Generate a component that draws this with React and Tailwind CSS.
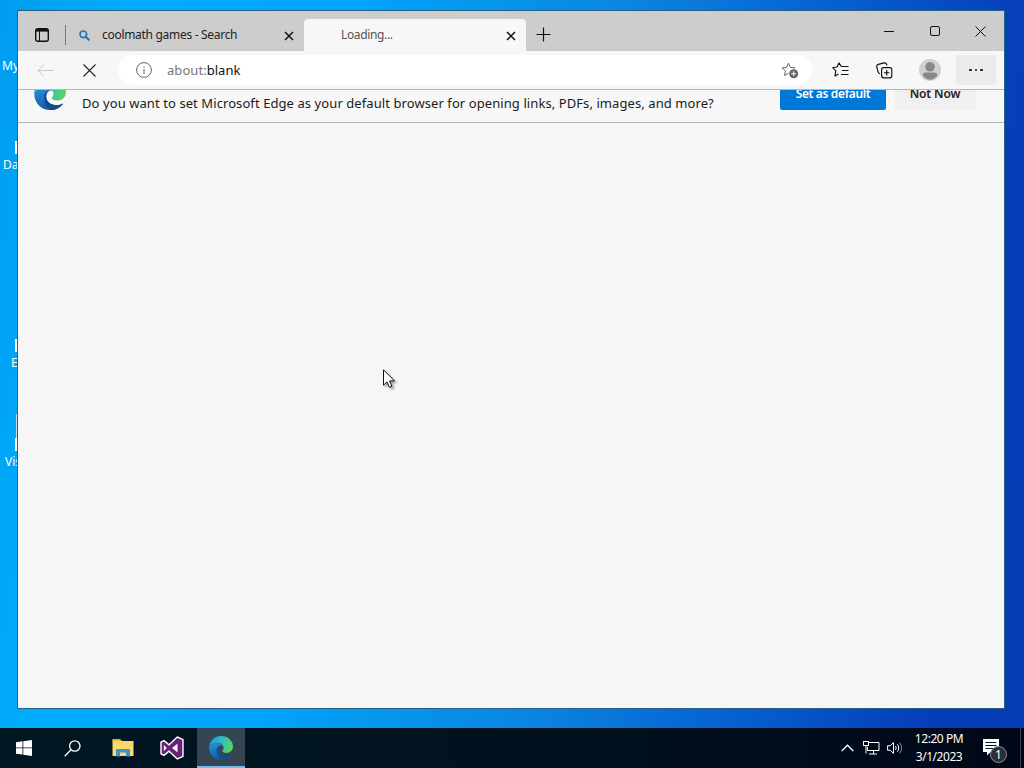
import { useId } from "react";

function EdgeLogo({ className }) {
  const id = useId();
  return (
    <svg viewBox="0 0 32 32" className={className}>
      <defs>
        <linearGradient id={id + "a"} x1="0" y1="0.3" x2="1" y2="0.6">
          <stop offset="0" stopColor="#2499dc" />
          <stop offset="0.5" stopColor="#31bfc0" />
          <stop offset="1" stopColor="#5bd65b" />
        </linearGradient>
        <linearGradient id={id + "b"} x1="0" y1="0" x2="0.4" y2="1">
          <stop offset="0" stopColor="#2496de" />
          <stop offset="1" stopColor="#1558a8" />
        </linearGradient>
      </defs>
      <path
        fill={`url(#${id}a)`}
        d="M.3 14.5C1 6.300 7.600 0 16 0c9.300 0 16 6.600 16 14 0 5-4 8.500-8.500 8.500-3.800 0-5.700-1.300-5.700-2.500 0-.7 1.700-1.500 1.700-4.200C19.500 11.500 15.300 9 10.500 9 5.500 9 1.700 11.200.3 14.500Z"
      />
      <path
        fill={`url(#${id}b)`}
        d="M.3 14.500C1.700 11.200 5.500 9 10.500 9c3.800 0 7 1.600 8.400 4.200-1.200-.7-2.200-.8-3.200-.5-2.200.7-3.500 3-3.500 5.700 0 5.500 5.300 8.700 10.300 8.700 2.900 0 5.100-.9 6.600-1.700C26.500 29.400 22 32 16.500 32 7 32-.3 24.500.3 14.500Z"
      />
      <path
        fill="#164a8b"
        d="M10.200 17.500c.4-2.700 2.500-4.700 5.500-4.800-2.200.7-3.500 3-3.500 5.700 0 5.500 5.300 8.700 10.300 8.700 2.900 0 5.100-.9 6.600-1.700-2.500 4-7 6.600-12.100 6.600-4.500-2.500-7.500-8.500-6.800-14.500Z"
      />
    </svg>
  );
}

function TabClose() {
  return (
    <svg viewBox="0 0 10 10" className="mt-px size-[10px] shrink-0" stroke="#111" strokeWidth="1.500">
      <path d="M1 1l8 8M9 1l-8 8" />
    </svg>
  );
}

function TabStrip() {
  return (
    <div className="flex h-10 shrink-0 bg-[#cdcdcd]">
      <div className="flex w-[48px] items-center pt-2">
        <svg viewBox="0 0 14 14" className="ml-[17px] size-[14px]" fill="none" stroke="#111">
          <rect x="0.7" y="0.7" width="12.600" height="12.600" rx="2" strokeWidth="1.400" />
          <path d="M1 2.300h12" strokeWidth="2.600" />
          <path d="M4.500 3v10" strokeWidth="1" />
        </svg>
        <div className="ml-auto h-[20px] w-px bg-[#777]" />
      </div>
      <div className="flex w-[238px] items-center pt-2 pr-[10px] pl-[13px]">
        <svg viewBox="0 0 11 11" className="size-[11px]" fill="none" stroke="#2b74b8" strokeWidth="1.700">
          <circle cx="4.300" cy="4.300" r="3.300" />
          <path d="M6.800 6.800l3.600 3.600" strokeWidth="2.100" />
        </svg>
        <span className="ml-3 text-[12px] tracking-[-0.3px] whitespace-nowrap text-[#222]">
          coolmath games - Search
        </span>
        <div className="ml-auto flex">
          <TabClose />
        </div>
      </div>
      <div className="mt-2 flex w-[222px] items-center rounded-t-[4px] bg-[#f7f7f7] pr-[10px] pl-[37px]">
        <span className="text-[12px] tracking-[-0.35px] text-[#555]">Loading...</span>
        <div className="ml-auto flex">
          <TabClose />
        </div>
      </div>
      <div className="flex items-center pt-[7px] pl-[10px]">
        <svg viewBox="0 0 15 15" className="size-[15px]" stroke="#111" strokeWidth="1.200">
          <path d="M7.500 0.500v14M0.500 7.500h14" />
        </svg>
      </div>
      <div className="ml-auto flex">
        <div className="flex w-[46px] items-center justify-center">
          <div className="h-px w-[10px] bg-[#111]" />
        </div>
        <div className="flex w-[46px] items-center justify-center pr-px">
          <div className="size-[10px] rounded-[2px] border border-[#111]" />
        </div>
        <div className="flex w-[46px] items-center justify-center pr-px">
          <svg viewBox="0 0 11 11" className="size-[11px]" stroke="#111">
            <path d="M0.500 0.500l10 10M10.500 0.500l-10 10" />
          </svg>
        </div>
      </div>
    </div>
  );
}

const STAR = "M7.500 1.200l1.900 4.200 4.500.5-3.400 3 1 4.600-4-2.300-4 2.300 1-4.600-3.400-3 4.500-.5z";

function Toolbar() {
  return (
    <div className="flex h-[39px] shrink-0 items-center border-b border-[#b5b5b5] bg-[#f7f7f7] pr-2 pl-[6px]">
      <div className="flex w-11 justify-center pr-px">
        <svg viewBox="0 0 17 13" className="h-[13px] w-[17px]" fill="none" stroke="#c8c8c8">
          <path d="M7 0.500l-6 6 6 6M1 6.500h15.500" />
        </svg>
      </div>
      <div className="flex w-11 justify-center pr-px">
        <svg viewBox="0 0 13 13" className="size-[13px]" stroke="#222" strokeWidth="1.100">
          <path d="M0.500 0.500l12 12M12.500 0.500l-12 12" />
        </svg>
      </div>
      <div className="ml-[6px] flex h-[30px] w-[694px] items-center rounded-full bg-white pr-[13px] pl-[18px]">
        <svg viewBox="0 0 16 16" className="size-[16px]" fill="none" stroke="#666">
          <circle cx="8" cy="8" r="7.400" />
          <path d="M8 7v5" />
          <path d="M8 4.300v1.300" />
        </svg>
        <span className="mt-[2px] ml-[15px] text-[13px] tracking-[0.05px] text-[#111]">
          <span className="text-[#767676]">about:</span>blank
        </span>
        <svg viewBox="0 0 18 17" className="mt-px ml-auto h-[17px] w-[18px]" fill="none">
          <path d={STAR} stroke="#666" />
          <circle cx="12.700" cy="11.700" r="5.200" fill="#fff" />
          <circle cx="12.700" cy="11.700" r="4.500" fill="#666" />
          <path d="M12.700 9.300v4.800M10.300 11.700h4.800" stroke="#fff" />
        </svg>
      </div>
      <div className="ml-[6px] flex w-11 justify-center">
        <svg viewBox="0 0 17 16" className="h-[16px] w-[17px]" fill="none" stroke="#111" strokeLinejoin="round">
          <path
            d="M9.300 4.500L7 0.900 5 5 0.600 5.700l3.200 3.200-.8 5 3.500-1.900M9.300 4.500h7.200M10 8.500h6.500M9 12.500h7.500"
            strokeWidth="1.150"
          />
        </svg>
      </div>
      <div className="flex w-11 justify-center">
        <svg viewBox="0 0 17 17" className="h-[17px] w-[17px]" fill="none" stroke="#111" strokeWidth="1.150">
          <rect x="5.600" y="5.600" width="10.200" height="10.200" rx="2" />
          <path d="M10.700 8v5.400M8 10.700h5.400" />
          <path d="M4 11.700c-1.200-.3-1.800-1-2-2L0.800 5c-.3-1.200.3-2.200 1.500-2.600L8 .9c1.200-.3 2.200.2 2.600 1.400l.3 1.200" />
        </svg>
      </div>
      <div className="ml-[13px] w-[22px]">
        <svg viewBox="0 0 22 22" className="size-[22px]">
          <circle cx="11" cy="11" r="11" fill="#d2d0ce" />
          <circle cx="11" cy="7.800" r="4.800" fill="#8a8886" />
          <path d="M3.800 16.500c0-2 1.400-2.900 3-2.900h8.400c1.600 0 3 .9 3 2.900-1.700 2.600-4.200 4.200-7.200 4.200s-5.500-1.600-7.200-4.200z" fill="#8a8886" />
        </svg>
      </div>
      <div className="ml-auto flex h-[30px] w-10 items-center justify-center gap-[3px] rounded-[2px] bg-[#ebebeb]">
        <div className="size-[2.5px] rounded-full bg-[#111]" />
        <div className="size-[2.5px] rounded-full bg-[#111]" />
        <div className="size-[2.5px] rounded-full bg-[#111]" />
      </div>
    </div>
  );
}

function DefaultBrowserBar() {
  return (
    <div className="flex h-[33px] shrink-0 items-end overflow-hidden border-b border-[#b5b5b5] bg-[#f7f7f7] pb-3 pl-4">
      <EdgeLogo className="size-8 shrink-0" />
      <span className="-mb-[3px] ml-4 text-[13px] leading-[20px] tracking-[0.08px] whitespace-nowrap text-[#1b1b1b]">
        Do you want to set Microsoft Edge as your default browser for opening links, PDFs, images, and more?
      </span>
      <div className="mr-7 ml-auto flex shrink-0 gap-[9px] text-[12px] leading-4 font-semibold">
        <div className="flex h-8 w-[106px] items-center justify-center rounded-[2px] bg-[#0078d7] tracking-[-0.35px] text-white">
          Set as default
        </div>
        <div className="flex h-8 w-[81px] items-center justify-center rounded-[2px] bg-[#f0f0f0] pr-px tracking-[-0.15px] text-[#222]">
          Not Now
        </div>
      </div>
    </div>
  );
}

function Taskbar() {
  return (
    <div className="flex h-10 items-stretch bg-linear-to-r from-[#001722] via-[#00121e] to-[#000818] text-white">
      <div className="flex w-12 items-center justify-center">
        <svg viewBox="0 0 16 16" className="size-[16px]" fill="#fff">
          <path d="M0 2.200l6.500-.9v6.200H0zM7.300 1.200L16 0v7.500H7.300zM0 8.300h6.500v6.300L0 13.700zM7.300 8.300H16V16l-8.700-1.200z" />
        </svg>
      </div>
      <div className="flex w-12 items-center justify-center">
        <svg viewBox="0 0 17 17" className="size-[17px]" fill="none" stroke="#fff" strokeWidth="1.300">
          <circle cx="10.800" cy="6" r="5.200" />
          <path d="M7 9.800L0.700 16.200" />
        </svg>
      </div>
      <div className="flex w-[53px] items-center justify-center">
        <svg viewBox="0 0 22 18" className="h-[18px] w-[22px]">
          <path d="M0.500 0h7.500l1.500 2H0.500z" fill="#e7a82c" />
          <path d="M0.500 2h21v15h-21z" fill="#fbd86c" />
          <path d="M0.500 2h8l2-1h-10z" fill="#f0b73c" />
          <path d="M4 17.500v-6.300c0-.7.500-1.200 1.200-1.200h11.600c.7 0 1.200.5 1.200 1.200v6.300h-4v-4H8v4z" fill="#3f93cb" />
        </svg>
      </div>
      <div className="flex w-12 items-center justify-center pr-[2px]">
        <svg viewBox="0 0 24 24" className="size-[24px]">
          <path
            d="M17.300 1L23 3.600v16.800L17.300 23 9 15.200 4 19.300 1 17.800V6.200l3-1.500 5 4.100z"
            fill="#68217a"
            stroke="#fff"
            strokeWidth="1.400"
          />
          <path d="M17.500 7.700v8.600L12 12zM3.800 9v6l3-3z" fill="#fff" />
        </svg>
      </div>
      <div className="flex w-12 items-center justify-center border-b-2 border-[#76b9ed] bg-[#344652]">
        <EdgeLogo className="mt-px size-6" />
      </div>
      <div className="ml-auto flex items-center">
        <svg viewBox="0 0 13 8" className="h-[8px] w-[13px]" fill="none" stroke="#fff" strokeWidth="1.300">
          <path d="M0.700 7l5.800-5.800L12.300 7" />
        </svg>
        <svg viewBox="0 0 17 14" className="ml-[9px] h-[14px] w-[17px]" fill="none" stroke="#fff">
          <path d="M6 1.500h10v8H4.500V6M10.500 9.500v3.500M6 13h8M3 7v5.500" />
          <rect x="0.500" y="0.500" width="5" height="4" />
          <path d="M3 4v3" />
        </svg>
        <svg viewBox="0 0 16 14" className="ml-[7px] h-[14px] w-[16px]" fill="none" stroke="#fff">
          <path d="M0.600 4.700h2.700L6.500 1.500v11L3.300 9.300H0.600z" />
          <path d="M8.500 5c.8 1.200.8 2.800 0 4M10.500 3.300c1.600 2.300 1.600 5.100 0 7.400" />
          <path d="M12.700 1.700c2.400 3.300 2.400 7.300 0 10.600" stroke="#8b949c" />
        </svg>
        <div className="ml-[6px] w-[60px] text-center text-[12px] leading-[18px] tracking-[-0.45px] whitespace-nowrap">
          <div>12:20 PM</div>
          <div>3/1/2023</div>
        </div>
        <div className="relative mr-[12px] ml-[14px] h-[18px] w-[25px]">
          <svg viewBox="0 0 17 17" className="size-[17px]">
            <path d="M0 0h16v13H7.500L4 16.500V13H0z" fill="#fff" />
            <path d="M2.500 3.500h11M2.500 6.500h11M2.500 9.500h8" stroke="#06121e" />
          </svg>
          <div className="absolute top-[7px] left-[7px] flex size-[17px] items-center justify-center rounded-full border border-[#8b8f94] bg-[#2b3038] text-[12px] leading-none">
            1
          </div>
        </div>
        <div className="mr-[3px] h-full w-px bg-[#3a4454]" />
      </div>
    </div>
  );
}

export default function App() {
  return (
    <div className="relative flex h-[768px] w-[1024px] flex-col overflow-hidden bg-[linear-gradient(98deg,#009df0_0%,#00adfc_12%,#00a4f8_32%,#0b86e2_55%,#0660cf_74%,#053fb9_90%,#053cb4_100%)] font-['Noto_Sans','Open_Sans',sans-serif]">
      <div className="min-h-0 flex-1 text-[12px] leading-4 text-white">
        <div className="absolute top-[58px] left-[2px]">My</div>
        <div className="absolute top-[141px] left-[15px] h-[13px] w-2 bg-white" />
        <div className="absolute top-[157px] left-[3px]">Da</div>
        <div className="absolute top-[339px] left-[15px] h-[13px] w-2 bg-white" />
        <div className="absolute top-[355px] left-[11px]">E</div>
        <div className="absolute top-[414px] left-[16px] h-[24px] w-2 bg-[#b9dfed]" />
        <div className="absolute top-[438px] left-[15px] h-[13px] w-2 bg-white" />
        <div className="absolute top-[454px] left-[5px]">Vis</div>
      </div>

      <div className="absolute top-[10px] left-[17px] flex h-[699px] w-[988px] flex-col border border-[#27617f] bg-[#f6f6f6]">
        <TabStrip />
        <Toolbar />
        <DefaultBrowserBar />
      </div>

      <Taskbar />

      <svg
        viewBox="0 0 13 20"
        className="absolute top-[369px] left-[383px] h-[20px] w-[13px] overflow-visible drop-shadow-[2px_2px_1px_rgba(0,0,0,0.35)]"
      >
        <path d="M0.500 0.800v15.400l3.500-3.300 2.400 5.400 2.500-1-2.400-5.400h5z" fill="#fff" stroke="#111" />
      </svg>
    </div>
  );
}
